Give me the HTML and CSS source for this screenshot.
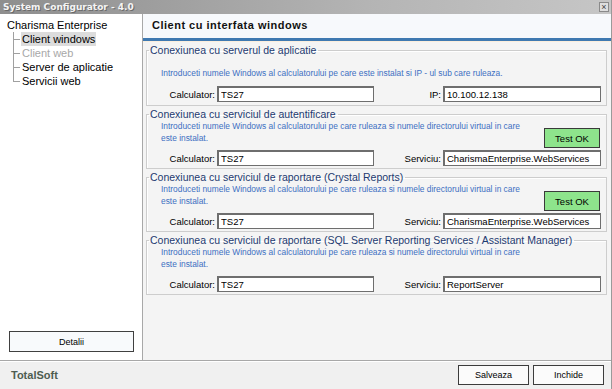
FILE: index.html
```html
<!DOCTYPE html>
<html lang="ro">
  <head>
    <meta charset="UTF-8">
    <title>System Configurator - 4.0</title>
    <link rel="stylesheet" href="styles.css">
  </head>
  <body>
    <div class="window">
      <div class="titlebar">
        <span class="title-text">System Configurator - 4.0</span>
        <span class="close-btn">&#215;</span>
      </div>

      <div class="main">
        <!-- Tree on the left -->
        <div class="sidebar">
          <div class="tree">
            <div class="tree-root">Charisma Enterprise</div>
            <div class="tree-children">
              <div class="tree-item selected"><span>Client windows</span></div>
              <div class="tree-item disabled"><span>Client web</span></div>
              <div class="tree-item"><span>Server de aplicatie</span></div>
              <div class="tree-item last"><span>Servicii web</span></div>
            </div>
          </div>
          <button class="details-btn">Detalii</button>
        </div>

        <!-- Settings page -->
        <div class="content">
          <div class="page-header">Client cu interfata windows</div>
          <div class="header-rule"></div>

          <div class="groups">
            <fieldset class="group group-first">
              <legend>Conexiunea cu serverul de aplicatie</legend>
              <div class="desc-row">
                <p class="desc">Introduceti numele Windows al calculatorului pe care este instalat si IP - ul sub care ruleaza.</p>
              </div>
              <div class="field-row">
                <label>Calculator:</label>
                <input class="field" type="text" value="TS27" readonly>
                <label>IP:</label>
                <input class="field" type="text" value="10.100.12.138" readonly>
              </div>
            </fieldset>

            <fieldset class="group">
              <legend>Conexiunea cu serviciul de autentificare</legend>
              <div class="desc-row">
                <p class="desc">Introduceti numele Windows al calculatorului pe care ruleaza si numele directorului virtual in care<br>este instalat.</p>
                <button class="test-btn">Test OK</button>
              </div>
              <div class="field-row">
                <label>Calculator:</label>
                <input class="field" type="text" value="TS27" readonly>
                <label>Serviciu:</label>
                <input class="field" type="text" value="CharismaEnterprise.WebServices" readonly>
              </div>
            </fieldset>

            <fieldset class="group">
              <legend>Conexiunea cu serviciul de raportare (Crystal Reports)</legend>
              <div class="desc-row">
                <p class="desc">Introduceti numele Windows al calculatorului pe care ruleaza si numele directorului virtual in care<br>este instalat.</p>
                <button class="test-btn">Test OK</button>
              </div>
              <div class="field-row">
                <label>Calculator:</label>
                <input class="field" type="text" value="TS27" readonly>
                <label>Serviciu:</label>
                <input class="field" type="text" value="CharismaEnterprise.WebServices" readonly>
              </div>
            </fieldset>

            <fieldset class="group">
              <legend>Conexiunea cu serviciul de raportare (SQL Server Reporting Services / Assistant Manager)</legend>
              <div class="desc-row">
                <p class="desc">Introduceti numele Windows al calculatorului pe care ruleaza si numele directorului virtual in care<br>este instalat.</p>
              </div>
              <div class="field-row">
                <label>Calculator:</label>
                <input class="field" type="text" value="TS27" readonly>
                <label>Serviciu:</label>
                <input class="field" type="text" value="ReportServer" readonly>
              </div>
            </fieldset>
          </div>
        </div>
      </div>

      <div class="footer">
        <span class="brand">TotalSoft</span>
        <div class="footer-buttons">
          <button class="footer-btn">Salveaza</button>
          <button class="footer-btn">Inchide</button>
        </div>
      </div>
    </div>
  </body>
</html>
```

FILE: styles.css
```css
body {
  margin: 0;
  font-family: "Liberation Sans", Arial, sans-serif;
  background-color: #f0f0f0;
}

.window {
  width: 612px;
  height: 389px;
  display: flex;
  flex-direction: column;
  box-sizing: border-box;
  border-right: 1px solid #9a9a9a;
  background: #f4f4f4;
}

/* Title bar */
.titlebar {
  height: 14px;
  display: flex;
  align-items: center;
  justify-content: space-between;
  padding: 0 2px 0 3px;
  background: linear-gradient(to right, #8e8e8e, #b4b4b4 60%, #c6c6c6);
}

.title-text {
  font-family: "DejaVu Sans", sans-serif;
  font-size: 9px;
  font-weight: bold;
  color: #f4f4f4;
  text-shadow: 1px 1px 0 #6a6a6a;
}

.close-btn {
  width: 8px;
  height: 8px;
  font-size: 9px;
  line-height: 8px;
  text-align: center;
  color: #404040;
  background: #dedede;
  border: 1px solid #8a8a8a;
}

.main {
  flex: 1;
  display: flex;
  min-height: 0;
}

/* Left tree */
.sidebar {
  width: 143px;
  background: #fff;
  border-right: 1px solid #a8a8a8;
  display: flex;
  flex-direction: column;
  justify-content: space-between;
  padding: 4px 0 8px 0;
  box-sizing: border-box;
}

.tree {
  font-size: 11px;
  color: #000;
}

.tree-root {
  height: 14px;
  line-height: 14px;
  padding-left: 7px;
}

.tree-children {
  margin-left: 13px;
}

.tree-item {
  position: relative;
  height: 14px;
  line-height: 14px;
  padding-left: 7px;
  border-left: 1px solid #a0a0a0;
}

.tree-item::before {
  content: "";
  position: absolute;
  left: 0;
  top: 7px;
  width: 6px;
  border-top: 1px solid #a0a0a0;
}

.tree-item.last {
  border-left-color: transparent;
}

.tree-item.last::after {
  content: "";
  position: absolute;
  left: -1px;
  top: 0;
  height: 8px;
  border-left: 1px solid #a0a0a0;
}

.tree-item span {
  padding: 1px 1px;
}

.tree-item.selected span {
  background: #dcdcdc;
}

.tree-item.disabled {
  color: #a8a8a8;
}

.details-btn {
  margin: 0 8px 0 9px;
  height: 21px;
  font-family: "Liberation Sans", Arial, sans-serif;
  font-size: 9px;
  background: #f8fafc;
  border: 1px solid #404040;
  padding: 0;
}

/* Right page */
.content {
  flex: 1;
  display: flex;
  flex-direction: column;
}

.page-header {
  height: 24px;
  line-height: 22px;
  padding-left: 9px;
  background: #f7f9fc;
  font-size: 11px;
  font-weight: bold;
  letter-spacing: 0.5px;
  color: #111;
}

.header-rule {
  height: 3px;
  background: #3f79b1;
  border-bottom: 1px solid #fbeedd;
}

.groups {
  display: flex;
  flex-direction: column;
  gap: 2px;
  padding: 2px 4px 0 3px;
}

.group {
  margin: 0;
  padding: 0;
  border: 1px solid #cdcdcd;
  box-shadow: inset 1px 1px 0 #fff;
}

.group legend {
  font-size: 10.5px;
  line-height: 12px;
  color: #1d3a70;
  padding: 0 2px 0 1px;
  margin-left: 2px;
}

.desc-row {
  display: flex;
  justify-content: space-between;
  align-items: flex-start;
  min-height: 28px;
}

.group-first .desc-row {
  min-height: 0;
  padding: 11px 0 7px 0;
}

.desc {
  margin: 0;
  padding-left: 14px;
  font-size: 8.4px;
  line-height: 12px;
  color: #3d6fc2;
}

.test-btn {
  width: 56px;
  height: 20px;
  margin: 8px 6px 0 0;
  padding: 0;
  font-family: "Liberation Sans", Arial, sans-serif;
  font-size: 9.5px;
  background: #8ee48c;
  border: 1px solid #3a3a3a;
}

.field-row {
  display: grid;
  grid-template-columns: 68px 157px 1fr 158px;
  column-gap: 2px;
  align-items: center;
  padding: 2px 5px 2px 0;
}

.group-first .field-row {
  padding: 0 5px 3px 0;
}

.field-row label {
  text-align: right;
  font-size: 9.5px;
  color: #000;
}

.field {
  box-sizing: border-box;
  height: 16px;
  margin: 0;
  padding: 0 2px;
  font-family: "Liberation Sans", Arial, sans-serif;
  font-size: 9.5px;
  color: #000;
  background: #fff;
  border: 1px solid #6e6e6e;
  border-top-width: 2px;
  border-left-width: 2px;
  outline: none;
}

/* Footer */
.footer {
  height: 29px;
  display: flex;
  align-items: center;
  justify-content: space-between;
  border-top: 1px solid #a8a8a8;
  box-shadow: inset 0 1px 0 #fff;
  background: #f0f0f0;
  padding: 0 7px 0 11px;
  box-sizing: border-box;
}

.brand {
  font-size: 11px;
  font-weight: bold;
  color: #4e5d50;
}

.footer-buttons {
  display: flex;
  gap: 4px;
}

.footer-btn {
  width: 71px;
  height: 20px;
  padding: 0;
  font-family: "Liberation Sans", Arial, sans-serif;
  font-size: 9px;
  background: #fbfbfb;
  border: 1px solid #3c3c3c;
}
```
